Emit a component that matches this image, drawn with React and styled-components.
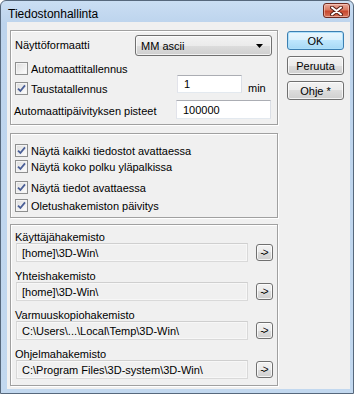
import React from 'react';
import styled, { createGlobalStyle } from 'styled-components';

const Global = createGlobalStyle`
  html, body { margin: 0; padding: 0; background: #ffffff; }
  body { font-family: "Liberation Sans", Arial, sans-serif; font-size: 11px; color: #000; }
  * { box-sizing: border-box; }
`;

const Window = styled.div`
  width: 354px;
  height: 394px;
  display: flex;
  flex-direction: column;
  background: linear-gradient(to bottom, #cadef3 0px, #bdd4ed 22px, #c2d8ef 100%);
  border: 1px solid #56687c;
  border-radius: 6px 6px 0 0;
  overflow: hidden;
`;

const TitleBar = styled.div`
  height: 21px;
  flex: none;
  display: flex;
  align-items: flex-start;
  justify-content: space-between;
  padding: 0 3px 0 7px;
`;

const Title = styled.div`
  font-size: 12px;
  line-height: 12px;
  margin-top: 7px;
  color: #000;
`;

const CloseBtn = styled.div`
  width: 27px;
  height: 15px;
  margin-top: 2px;
  border: 1px solid #6e2a20;
  border-radius: 3px;
  background: linear-gradient(to bottom, #e9a899 0%, #d97a63 45%, #c7472d 55%, #d5735a 100%);
  box-shadow: inset 0 0 0 1px rgba(255, 220, 210, 0.5);
  display: flex;
  align-items: center;
  justify-content: center;
`;

const Client = styled.div`
  margin: 0 3px 4px 6px;
  height: 367px;
  background: #f0f0f0;
  display: flex;
  padding: 8px 0 0 3px;
`;

const LeftCol = styled.div`
  width: 268px;
  display: flex;
  flex-direction: column;
`;

const RightCol = styled.div`
  margin-left: 9px;
  padding-top: 1px;
  display: flex;
  flex-direction: column;
  gap: 6px;
`;

const Group = styled.div`
  border: 1px solid #a0a0a0;
  box-shadow: inset 1px 1px 0 #ffffff, 1px 1px 0 #ffffff;
  height: ${p => p.$h}px;
  margin-top: ${p => p.$mt || 0}px;
  padding: ${p => p.$pt || 0}px 0 0 4px;
  display: flex;
  flex-direction: column;
`;

const Row = styled.div`
  display: flex;
  align-items: ${p => p.$align || 'center'};
  height: ${p => p.$h}px;
  margin-top: ${p => p.$mt || 0}px;
`;

const Label = styled.div`
  width: ${p => (p.$w ? p.$w + 'px' : 'auto')};
  line-height: 13px;
  white-space: nowrap;
  padding-top: ${p => p.$pt || 0}px;
  margin-left: ${p => p.$ml || 0}px;
  flex: none;
`;

const Select = styled.div`
  width: 137px;
  height: 21px;
  border: 1px solid #707070;
  border-radius: 3px;
  background: linear-gradient(to bottom, #f3f3f3 0%, #ebebeb 50%, #dddddd 50%, #cfcfcf 100%);
  box-shadow: inset 0 0 0 1px rgba(255, 255, 255, 0.7);
  display: flex;
  align-items: center;
  justify-content: space-between;
  padding: 0 8px 0 5px;
`;

const TextInput = styled.div`
  width: ${p => p.$w}px;
  height: ${p => p.$h || 18}px;
  background: #ffffff;
  border: 1px solid #abadb3;
  border-left-color: #e2e3ea;
  border-right-color: #dbdfe6;
  border-bottom-color: #e3e9ef;
  display: flex;
  align-items: center;
  padding-left: 6px;
  flex: none;
`;

const Unit = styled.div`
  margin-left: 6px;
  margin-top: 7px;
  line-height: 13px;
`;

const CheckRow = styled.label`
  display: flex;
  align-items: center;
  height: 13px;
  width: ${p => (p.$w ? p.$w + 'px' : 'auto')};
  margin-top: ${p => p.$mt || 0}px;
  flex: none;
  white-space: nowrap;
`;

const Box = styled.span`
  width: 13px;
  height: 13px;
  border: 1px solid #8e8f8f;
  background: linear-gradient(135deg, #dcdcdc 0%, #f4f4f4 70%, #ffffff 100%);
  box-shadow: inset 0 0 0 1px #f4f4f4;
  display: inline-flex;
  align-items: center;
  justify-content: center;
  margin-right: 3px;
  flex: none;
`;

const Button = styled.div`
  width: 57px;
  height: ${p => p.$h || 19}px;
  border: 1px solid ${p => (p.$default ? '#3c7fb1' : '#707070')};
  border-radius: 3px;
  background: ${p =>
    p.$default
      ? 'linear-gradient(to bottom, #eaf6fd 0%, #d9f0fc 50%, #bee6fd 50%, #a7d9f5 100%)'
      : 'linear-gradient(to bottom, #f2f2f2 0%, #ebebeb 50%, #dddddd 50%, #cfcfcf 100%)'};
  box-shadow: inset 0 0 0 1px ${p => (p.$default ? '#aee0fb' : 'rgba(255,255,255,0.75)')};
  display: flex;
  align-items: center;
  justify-content: center;
  font-size: 11px;
  line-height: 12px;
`;

const PathRow = styled.div`
  display: flex;
  align-items: center;
  height: 19px;
  margin-left: 1px;
`;

const PathField = styled.div`
  width: 232px;
  height: 19px;
  background: #f0f0f0;
  border: 1px solid #d9d9d9;
  border-top-color: #cfcfcf;
  box-shadow: inset 0 0 0 1px #f7f7f7;
  display: flex;
  align-items: center;
  padding-left: 5px;
  white-space: nowrap;
  overflow: hidden;
`;

const ArrowBtn = styled.div`
  width: 17px;
  height: 17px;
  margin-left: 8px;
  border: 1px solid #707070;
  border-radius: 3px;
  background: linear-gradient(to bottom, #f2f2f2 0%, #ebebeb 50%, #dddddd 50%, #cfcfcf 100%);
  box-shadow: inset 0 0 0 1px rgba(255, 255, 255, 0.75);
  display: flex;
  align-items: center;
  justify-content: center;
  font-size: 10px;
  letter-spacing: -1px;
  padding-right: 1px;
`;

const DirLabel = styled.div`
  line-height: 12px;
  height: 12px;
  margin-top: ${p => p.$mt || 0}px;
`;

const Check = () => (
  <Box>
    <svg width="9" height="9" viewBox="0 0 9 9">
      <path d="M1 4.6 L3.4 7 L8 1.4" fill="none" stroke="#4a5f97" strokeWidth="1.8" />
    </svg>
  </Box>
);

const Checkbox = ({ checked, children, w, mt }) => (
  <CheckRow $w={w} $mt={mt}>
    {checked ? <Check /> : <Box />}
    {children}
  </CheckRow>
);

const dirs = [
  ['Käyttäjähakemisto', '[home]\\3D-Win\\'],
  ['Yhteishakemisto', '[home]\\3D-Win\\'],
  ['Varmuuskopiohakemisto', 'C:\\Users\\...\\Local\\Temp\\3D-Win\\'],
  ['Ohjelmahakemisto', 'C:\\Program Files\\3D-system\\3D-Win\\'],
];

export default function App() {
  return (
    <>
      <Global />
      <Window>
        <TitleBar>
          <Title>Tiedostonhallinta</Title>
          <CloseBtn>
            <svg width="13" height="10" viewBox="0 0 13 10">
              <path d="M2 1.5 L11 8.5 M11 1.5 L2 8.5" stroke="#5b2219" strokeWidth="4" strokeLinecap="round" />
              <path d="M2 1.5 L11 8.5 M11 1.5 L2 8.5" stroke="#ffffff" strokeWidth="2" strokeLinecap="round" />
            </svg>
          </CloseBtn>
        </TitleBar>
        <Client>
          <LeftCol>
            <Group $h={95} $pt={4}>
              <Row $h={21}>
                <Label $w={120}>Näyttöformaatti</Label>
                <Select>
                  <span>MM ascii</span>
                  <svg width="7" height="4" viewBox="0 0 7 4">
                    <path d="M0 0 H7 L3.5 4 Z" fill="#000" />
                  </svg>
                </Select>
              </Row>
              <Checkbox mt={6}>Automaattitallennus</Checkbox>
              <Row $h={19} $align="flex-start">
                <CheckRow $w={162} $mt={7}>
                  <Check />
                  Taustatallennus
                </CheckRow>
                <TextInput $w={65}>1</TextInput>
                <Unit>min</Unit>
              </Row>
              <Row $h={19} $mt={6}>
                <Label $w={162} $ml={-1} $pt={3}>Automaattipäivityksen pisteet</Label>
                <TextInput $w={95} $h={19}>100000</TextInput>
              </Row>
            </Group>
            <Group $h={85} $mt={8} $pt={10}>
              <Checkbox checked>Näytä kaikki tiedostot avattaessa</Checkbox>
              <Checkbox checked mt={3}>Näytä koko polku yläpalkissa</Checkbox>
              <Checkbox checked mt={8}>Näytä tiedot avattaessa</Checkbox>
              <Checkbox checked mt={5}>Oletushakemiston päivitys</Checkbox>
            </Group>
            <Group $h={162} $mt={6} $pt={6}>
              {dirs.map(([label, path], i) => (
                <React.Fragment key={label}>
                  <DirLabel $mt={i === 0 ? 0 : 8}>{label}</DirLabel>
                  <PathRow>
                    <PathField>{path}</PathField>
                    <ArrowBtn>-&gt;</ArrowBtn>
                  </PathRow>
                </React.Fragment>
              ))}
            </Group>
          </LeftCol>
          <RightCol>
            <Button $default>OK</Button>
            <Button>Peruuta</Button>
            <Button>Ohje *</Button>
          </RightCol>
        </Client>
      </Window>
    </>
  );
}
